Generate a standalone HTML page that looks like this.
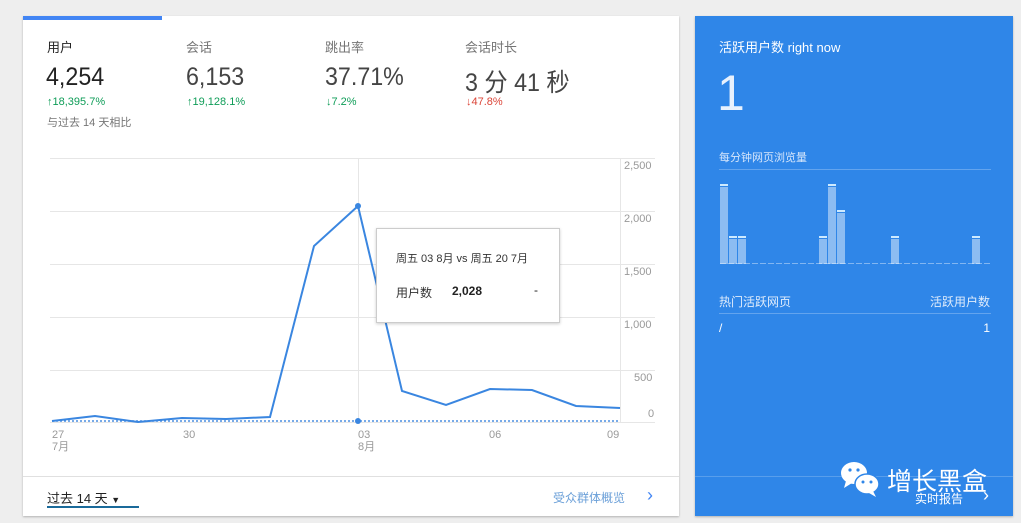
<!DOCTYPE html><html><head><meta charset="utf-8"><style>
body{margin:0;width:1021px;height:523px;background:#eeeeee;font-family:"Liberation Sans","Noto Sans CJK SC",sans-serif;position:relative;overflow:hidden}
.a{position:absolute;white-space:nowrap}
.card{position:absolute;left:23px;top:16px;width:656px;height:500px;background:#fff;box-shadow:0 1px 2px rgba(0,0,0,.25)}
.rc{position:absolute;left:695px;top:16px;width:318px;height:500px;background:#2f86e8;box-shadow:0 1px 2px rgba(0,0,0,.25);color:#fff}
.lbl{font-size:13px;color:#757575}
.big{font-size:25px;color:#444;transform:scaleX(.93);transform-origin:left}
.g{font-size:11px;color:#0f9d58}.r{font-size:11px;color:#db4437}
</style></head><body>
<div class="card">
<div class="a" style="left:0;top:0;width:139px;height:4px;background:#4285f4"></div>
<div class="a" style="left:24px;top:21px;font-size:13px;color:#222">用户</div>
<div class="a big" style="left:23px;top:47px;color:#222">4,254</div>
<div class="a g" style="left:24px;top:80px">↑18,395.7%</div>
<div class="a" style="left:24px;top:98px;font-size:11px;color:#757575">与过去 14 天相比</div>
<div class="a lbl" style="left:163px;top:21px">会话</div>
<div class="a big" style="left:163px;top:47px">6,153</div>
<div class="a g" style="left:164px;top:80px">↑19,128.1%</div>
<div class="a lbl" style="left:302px;top:21px">跳出率</div>
<div class="a big" style="left:302px;top:47px">37.71%</div>
<div class="a g" style="left:303px;top:80px">↓7.2%</div>
<div class="a lbl" style="left:442px;top:21px">会话时长</div>
<div class="a big" style="left:442px;top:47px">3 分 41 秒</div>
<div class="a r" style="left:443px;top:80px">↓47.8%</div>
<div class="a" style="left:0;top:460px;width:656px;height:1px;background:#e0e0e0"></div>
<div class="a" style="left:24px;top:472px;font-size:13px;color:#222">过去 14 天 <span style="font-size:9px">▼</span></div>
<div class="a" style="left:24px;top:490px;width:92px;height:2px;background:#1a6a9a"></div>
<div class="a" style="left:530px;top:473px;font-size:12px;color:#6a9fd8">受众群体概览</div>
<div class="a" style="left:624px;top:469px;font-size:18px;color:#4285f4">›</div>
</div>
<svg class="a" style="left:0;top:0" width="690" height="460">
<g stroke="#e6e6e6" stroke-width="1">
<line x1="50" y1="158.5" x2="655" y2="158.5"/><line x1="50" y1="211.5" x2="655" y2="211.5"/><line x1="50" y1="264.5" x2="655" y2="264.5"/><line x1="50" y1="317.5" x2="655" y2="317.5"/><line x1="50" y1="370.5" x2="655" y2="370.5"/><line x1="50" y1="422.5" x2="655" y2="422.5"/>
<line x1="358.5" y1="158" x2="358.5" y2="422"/><line x1="620.5" y1="158" x2="620.5" y2="422"/>
</g>
<line x1="52" y1="421" x2="620" y2="421" stroke="#4a8ee0" stroke-width="1.5" stroke-dasharray="2,2"/>
<polyline fill="none" stroke="#3a86e0" stroke-width="2" points="52,421 95,416 138,422 182,418 226,419 270,417 314,246 358,206 402,391 446,405 490,389 532,390 576,406 620,408"/>
<circle cx="358" cy="206" r="3" fill="#3a86e0"/><circle cx="358" cy="421" r="3" fill="#3a86e0"/>
<g font-family="Liberation Sans" font-size="11" fill="#999">
<text x="624" y="169">2,500</text><text x="624" y="222">2,000</text><text x="624" y="275">1,500</text><text x="624" y="328">1,000</text><text x="634" y="381">500</text><text x="648" y="417">0</text>
<text x="52" y="438">27</text><text x="52" y="450">7月</text><text x="183" y="438">30</text><text x="358" y="438">03</text><text x="358" y="450">8月</text><text x="489" y="438">06</text><text x="607" y="438">09</text>
</g></svg>
<div class="a" style="left:376px;top:228px;width:182px;height:93px;background:#fff;border:1px solid #ccc;box-shadow:0 1px 3px rgba(0,0,0,.2)">
<div class="a" style="left:19px;top:21px;font-size:11px;color:#333">周五 03 8月 vs 周五 20 7月</div>
<div class="a" style="left:19px;top:55px;font-size:12px;color:#333">用户数</div>
<div class="a" style="left:75px;top:55px;font-size:12px;color:#222;font-weight:bold">2,028</div>
<div class="a" style="left:157px;top:54px;font-size:12px;color:#222">-</div>
</div>
<div class="rc">
<div class="a" style="left:24px;top:21px;font-size:13px">活跃用户数 right now</div>
<div class="a" style="left:22px;top:48px;font-size:50px;color:#e8f1fd">1</div>
<div class="a" style="left:24px;top:133px;font-size:11px;color:#d6e6fb">每分钟网页浏览量</div>
<div class="a" style="left:24px;top:153px;width:272px;height:1px;background:rgba(255,255,255,.25)"></div>
<svg class="a" style="left:0;top:160px" width="318" height="110">
<line x1="25" y1="87.5" x2="295" y2="87.5" stroke="rgba(255,255,255,.4)" stroke-dasharray="6,2"/>
<g fill="rgba(255,255,255,.45)">
<rect x="25" y="11" width="8" height="77"/><rect x="34" y="63" width="8" height="25"/><rect x="43" y="63" width="8" height="25"/>
<rect x="124" y="63" width="8" height="25"/><rect x="133" y="11" width="8" height="77"/><rect x="142" y="37" width="8" height="51"/>
<rect x="196" y="63" width="8" height="25"/><rect x="277" y="63" width="8" height="25"/></g>
<g fill="#cdeaff"><rect x="25" y="8" width="8" height="2"/><rect x="34" y="60" width="8" height="2"/><rect x="43" y="60" width="8" height="2"/><rect x="124" y="60" width="8" height="2"/><rect x="133" y="8" width="8" height="2"/><rect x="142" y="34" width="8" height="2"/><rect x="196" y="60" width="8" height="2"/><rect x="277" y="60" width="8" height="2"/></g>
</svg>
<div class="a" style="left:24px;top:277px;font-size:12px;color:#e0ecfb">热门活跃网页</div>
<div class="a" style="right:23px;top:277px;font-size:12px;color:#e0ecfb">活跃用户数</div>
<div class="a" style="left:24px;top:297px;width:272px;height:1px;background:rgba(255,255,255,.25)"></div>
<div class="a" style="left:24px;top:305px;font-size:12px">/</div>
<div class="a" style="right:23px;top:305px;font-size:12px">1</div>
<div class="a" style="left:0;top:460px;width:318px;height:1px;background:rgba(255,255,255,.2)"></div>
<svg class="a" style="left:144px;top:443px" width="44" height="40">
<ellipse cx="15" cy="14" rx="13" ry="11" fill="#fff"/><path d="M7 22 L5 29 L13 24Z" fill="#fff"/>
<circle cx="11" cy="11" r="1.6" fill="#2f86e8"/><circle cx="19" cy="11" r="1.6" fill="#2f86e8"/>
<ellipse cx="28" cy="25" rx="12" ry="10" fill="#fff" stroke="#2f86e8" stroke-width="1.5"/><path d="M34 32 L37 38 L30 34Z" fill="#fff"/>
<circle cx="24" cy="23" r="1.5" fill="#2f86e8"/><circle cx="32" cy="23" r="1.5" fill="#2f86e8"/>
</svg>
<div class="a" style="left:192px;top:446px;font-size:25px">增长黑盒</div>
<div class="a" style="left:220px;top:474px;font-size:12px">实时报告</div>
<div class="a" style="left:288px;top:469px;font-size:18px">›</div>
</div>
</body></html>
